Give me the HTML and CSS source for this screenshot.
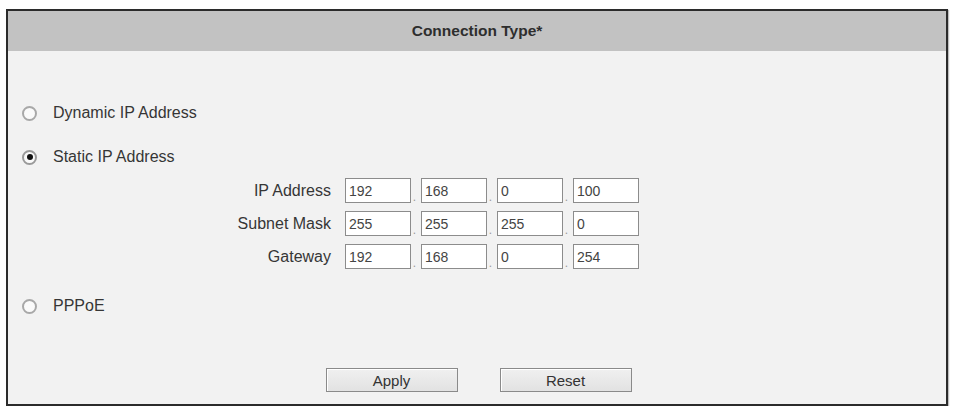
FILE: index.html
```html
<!doctype html>
<html lang="en">

<head>
  <meta charset="UTF-8">
  <meta name="viewport" content="width=device-width, initial-scale=1.0">
  <title>Connection Type</title>
  <link rel="stylesheet" href="styles.css">
</head>

<body>
  <form class="panel">
    <div class="panel-head">Connection Type*</div>

    <div class="panel-body">
      <label class="option option-dynamic">
        <input type="radio" name="conn" value="dhcp">
        <span>Dynamic IP Address</span>
      </label>

      <label class="option option-static">
        <input type="radio" name="conn" value="static" checked>
        <span>Static IP Address</span>
      </label>

      <div class="ip-table">
        <span class="ip-label">IP Address</span>
        <div class="ip-fields">
          <input class="octet" value="192"><span class="dot">.</span>
          <input class="octet" value="168"><span class="dot">.</span>
          <input class="octet" value="0"><span class="dot">.</span>
          <input class="octet" value="100">
        </div>

        <span class="ip-label">Subnet Mask</span>
        <div class="ip-fields">
          <input class="octet" value="255"><span class="dot">.</span>
          <input class="octet" value="255"><span class="dot">.</span>
          <input class="octet" value="255"><span class="dot">.</span>
          <input class="octet" value="0">
        </div>

        <span class="ip-label">Gateway</span>
        <div class="ip-fields">
          <input class="octet" value="192"><span class="dot">.</span>
          <input class="octet" value="168"><span class="dot">.</span>
          <input class="octet" value="0"><span class="dot">.</span>
          <input class="octet" value="254">
        </div>
      </div>

      <label class="option option-pppoe">
        <input type="radio" name="conn" value="pppoe">
        <span>PPPoE</span>
      </label>

      <div class="actions">
        <button type="button" class="btn">Apply</button>
        <button type="reset" class="btn">Reset</button>
      </div>
    </div>
  </form>
</body>

</html>
```

FILE: styles.css
```css
* {
  margin: 0;
  padding: 0;
  box-sizing: border-box;
}

body {
  background-color: #fff;
  font-family: "Liberation Sans", Arial, sans-serif;
  color: #363636;
}

.panel {
  width: 942px;
  margin: 9px 0 0 6px;
  border: 2px solid #2b2b2b;
  background: #f2f2f2;
  box-shadow: 1px 1px 1px rgba(0, 0, 0, .25);
}

.panel-head {
  height: 40px;
  line-height: 40px;
  background: #c2c2c2;
  text-align: center;
  font-weight: bold;
  font-size: 15.5px;
  color: #2e2e2e;
}

.panel-body {
  display: flex;
  flex-direction: column;
  padding: 52px 0 12px;
}

/* radio rows */
.option {
  display: flex;
  align-items: center;
  height: 20px;
  font-size: 16px;
  padding-left: 14px;
  gap: 16px;
}

.option-static {
  margin-top: 24px;
}

.option-pppoe {
  margin-top: 27px;
}

.option input {
  appearance: none;
  -webkit-appearance: none;
  width: 15px;
  height: 15px;
  border: 2px solid #a8a8a8;
  border-radius: 50%;
  background: #fafafa;
  display: grid;
  place-items: center;
}

.option input:checked {
  border-color: #9a9a9a;
}

.option input:checked::after {
  content: "";
  width: 6px;
  height: 6px;
  border-radius: 50%;
  background: #111;
}

/* static address fields */
.ip-table {
  display: grid;
  grid-template-columns: 111px auto;
  column-gap: 14px;
  row-gap: 8px;
  align-items: center;
  margin: 11px 0 0 212px;
}

.ip-label {
  text-align: right;
  font-size: 16px;
  white-space: nowrap;
}

.ip-fields {
  display: flex;
  align-items: flex-end;
  height: 25px;
}

.octet {
  width: 66px;
  height: 25px;
  border: 1px solid #8c8c8c;
  background: #fff;
  padding: 0 3px;
  font: 14px "Liberation Sans", Arial, sans-serif;
  color: #444;
}

.dot {
  width: 10px;
  padding-right: 3px;
  text-align: center;
  font-size: 12px;
  line-height: 12px;
  color: #999;
}

/* buttons */
.actions {
  display: flex;
  justify-content: center;
  gap: 42px;
  margin-top: 52px;
  padding-left: 3px;
}

.btn {
  width: 132px;
  height: 24px;
  border: 1px solid #8a8a8a;
  background: linear-gradient(#f0f0f0, #e2e2e2);
  box-shadow: inset 1px 1px 0 #fff;
  font: 15px "Liberation Sans", Arial, sans-serif;
  color: #333;
}
```
